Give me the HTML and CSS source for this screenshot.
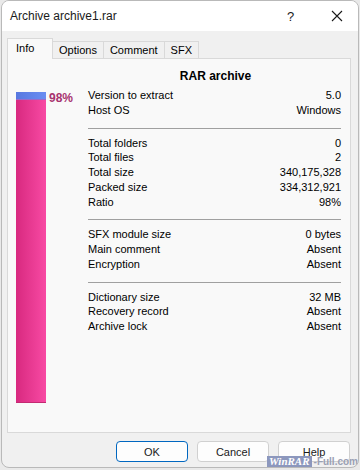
FILE: index.html
```html
<!DOCTYPE html>
<html lang="en">
<head>
  <meta charset="UTF-8">
  <title>Archive archive1.rar</title>
  <link rel="stylesheet" href="styles.css">
</head>
<body>

  <div class="win">
    <div class="titlebar">
      <span class="title">Archive archive1.rar</span>
      <span class="help-btn">?</span>
      <span class="close-btn">
        <svg width="12" height="12" viewBox="0 0 12 12">
          <path d="M1 1 L11 11 M11 1 L1 11" stroke="#1a1a1a" stroke-width="1.1" fill="none"/>
        </svg>
      </span>
    </div>

    <div class="body">
      <div class="tabs">
        <div class="tab active">Info</div>
        <div class="tab">Options</div>
        <div class="tab">Comment</div>
        <div class="tab">SFX</div>
      </div>

      <div class="panel">
        <div class="ratio">
          <div class="bar">
            <div class="bar-top"></div>
          </div>
          <div class="pct">98%</div>
        </div>

        <div class="info">
          <div class="head">RAR archive</div>

          <div class="group">
            <div class="row"><span>Version to extract</span><span>5.0</span></div>
            <div class="row"><span>Host OS</span><span>Windows</span></div>
          </div>
          <div class="sep"></div>
          <div class="group">
            <div class="row"><span>Total folders</span><span>0</span></div>
            <div class="row"><span>Total files</span><span>2</span></div>
            <div class="row"><span>Total size</span><span>340,175,328</span></div>
            <div class="row"><span>Packed size</span><span>334,312,921</span></div>
            <div class="row"><span>Ratio</span><span>98%</span></div>
          </div>
          <div class="sep"></div>
          <div class="group">
            <div class="row"><span>SFX module size</span><span>0 bytes</span></div>
            <div class="row"><span>Main comment</span><span>Absent</span></div>
            <div class="row"><span>Encryption</span><span>Absent</span></div>
          </div>
          <div class="sep"></div>
          <div class="group">
            <div class="row"><span>Dictionary size</span><span>32 MB</span></div>
            <div class="row"><span>Recovery record</span><span>Absent</span></div>
            <div class="row"><span>Archive lock</span><span>Absent</span></div>
          </div>
        </div>
      </div>

      <div class="buttons">
        <button class="btn default">OK</button>
        <button class="btn">Cancel</button>
        <button class="btn">Help</button>
      </div>
    </div>

    <div class="mark"><span class="mark-box">WinRAR</span><span class="mark-rest">-Full.com</span></div>
  </div>

</body>
</html>
```

FILE: styles.css
```css
* {
  margin: 0;
  padding: 0;
  box-sizing: border-box;
}

body {
  width: 360px;
  height: 470px;
  background: #e9e9e9;
  font-family: "Liberation Sans", Arial, sans-serif;
  font-size: 11px;
  color: #000;
  overflow: hidden;
}

.win {
  position: relative;
  width: 358px;
  height: 468px;
  margin-left: 1px;
  border: 1px solid #b9b9b9;
  border-radius: 8px;
  overflow: hidden;
  background: #f0f0f0;
}

.titlebar {
  height: 30px;
  background: #fff;
  display: flex;
  align-items: center;
  padding-left: 8px;
}

.title {
  font-size: 12px;
  flex: 1;
  color: #1a1a1a;
}

.help-btn {
  width: 20px;
  font-size: 13px;
  margin-right: 24px;
  color: #1a1a1a;
}

.close-btn {
  display: flex;
  margin-right: 15px;
}

.body {
  padding: 7px 7px 0 5px;
}

.tabs {
  display: flex;
  align-items: flex-end;
  height: 20px;
}

.tab {
  height: 17px;
  padding: 0 6px;
  border: 1px solid #d9d9d9;
  border-bottom: none;
  border-left: none;
  background: #f0f0f0;
  line-height: 16px;
}

.tab.active {
  height: 21px;
  width: 46px;
  padding-left: 8px;
  border-left: 1px solid #d9d9d9;
  background: #f9f9f9;
  margin-bottom: -1px;
  position: relative;
  z-index: 1;
  line-height: 18px;
}

.panel {
  height: 375px;
  border: 1px solid #d9d9d9;
  background: #f9f9f9;
  display: flex;
  padding: 10px 8px 0 8px;
}

.ratio {
  display: flex;
  width: 72px;
  padding-top: 23px;
}

.bar {
  width: 30px;
  height: 311px;
  background: linear-gradient(to right, #d8297f, #f84aa4);
  border-bottom: 1px solid #c32a72;
}

.bar-top {
  height: 8px;
  background: linear-gradient(to right, #5878e0, #6a8ef2);
  border-bottom: 1px solid #9a6ac8;
}

.pct {
  margin-left: 3px;
  font-weight: bold;
  font-size: 12px;
  color: #a8336f;
  line-height: 12px;
}

.info {
  width: 253px;
}

.head {
  text-align: center;
  font-weight: bold;
  font-size: 12px;
  line-height: 15px;
  margin-bottom: 4px;
  padding-left: 2px;
}

.row {
  display: flex;
  justify-content: space-between;
  line-height: 14.75px;
}

.sep {
  height: 1px;
  background: #a0a0a0;
  margin: 10px 0 7px;
}

.buttons {
  display: flex;
  justify-content: flex-end;
  gap: 9px;
  padding: 8px 1px 0 0;
}

.btn {
  width: 72px;
  height: 21px;
  border: 1px solid #d0d0d0;
  border-radius: 4px;
  background: #fdfdfd;
  font-family: "Liberation Sans", Arial, sans-serif;
  font-size: 11px;
  color: #1a1a1a;
}

.btn.default {
  border: 1px solid #0067c0;
}

.mark {
  position: absolute;
  right: 0;
  bottom: 0;
  display: flex;
  font-size: 10px;
  font-weight: bold;
  line-height: 11px;
}

.mark-box {
  background: #8c97bd;
  color: #fff;
  font-style: italic;
  font-family: "Liberation Serif", serif;
  font-size: 11px;
  padding: 0 2px;
}

.mark-rest {
  color: #9aa0b4;
  padding-left: 2px;
}
```
